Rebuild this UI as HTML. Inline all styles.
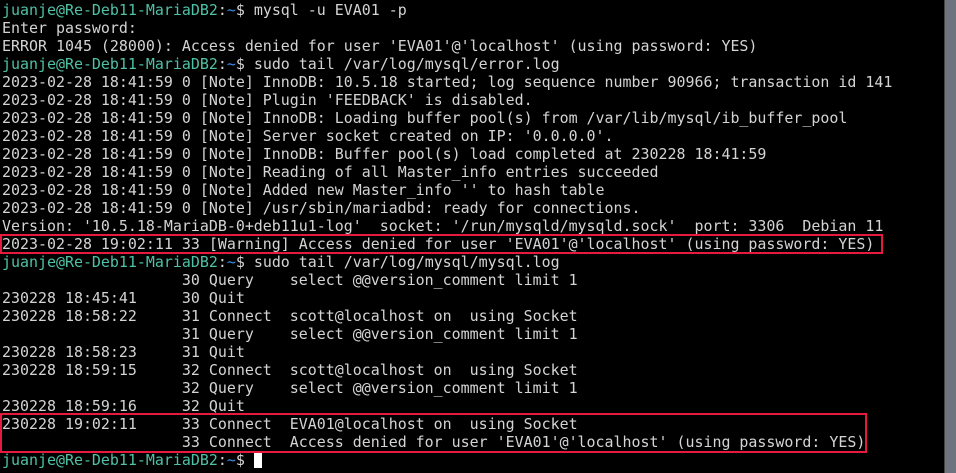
<html><head><style>
body{margin:0;background:#000;width:956px;height:473px;overflow:hidden;position:relative}
pre{margin:0;position:absolute;left:2px;top:1px;font-family:"DejaVu Sans Mono","Liberation Mono",monospace;font-size:14.95px;line-height:18px;color:#d4d4d4}
.g{color:#4fc1a6}.b{color:#3b8eea}
.sb{position:absolute;left:944px;top:0;width:12px;height:473px;background:#6f7380;border-left:1px solid #444}
.box{position:absolute;border:2px solid #e8193f;box-sizing:border-box}
.cur{display:inline-block;width:8px;height:16px;background:#fff;vertical-align:-3px}
</style></head><body>
<pre><span class="g">juanje@Re-Deb11-MariaDB2</span>:<span class="b">~</span>$ mysql -u EVA01 -p
Enter password:
ERROR 1045 (28000): Access denied for user 'EVA01'@'localhost' (using password: YES)
<span class="g">juanje@Re-Deb11-MariaDB2</span>:<span class="b">~</span>$ sudo tail /var/log/mysql/error.log
2023-02-28 18:41:59 0 [Note] InnoDB: 10.5.18 started; log sequence number 90966; transaction id 141
2023-02-28 18:41:59 0 [Note] Plugin 'FEEDBACK' is disabled.
2023-02-28 18:41:59 0 [Note] InnoDB: Loading buffer pool(s) from /var/lib/mysql/ib_buffer_pool
2023-02-28 18:41:59 0 [Note] Server socket created on IP: '0.0.0.0'.
2023-02-28 18:41:59 0 [Note] InnoDB: Buffer pool(s) load completed at 230228 18:41:59
2023-02-28 18:41:59 0 [Note] Reading of all Master_info entries succeeded
2023-02-28 18:41:59 0 [Note] Added new Master_info '' to hash table
2023-02-28 18:41:59 0 [Note] /usr/sbin/mariadbd: ready for connections.
Version: '10.5.18-MariaDB-0+deb11u1-log'  socket: '/run/mysqld/mysqld.sock'  port: 3306  Debian 11
2023-02-28 19:02:11 33 [Warning] Access denied for user 'EVA01'@'localhost' (using password: YES)
<span class="g">juanje@Re-Deb11-MariaDB2</span>:<span class="b">~</span>$ sudo tail /var/log/mysql/mysql.log
                    30 Query    select @@version_comment limit 1
230228 18:45:41     30 Quit
230228 18:58:22     31 Connect  scott@localhost on  using Socket
                    31 Query    select @@version_comment limit 1
230228 18:58:23     31 Quit
230228 18:59:15     32 Connect  scott@localhost on  using Socket
                    32 Query    select @@version_comment limit 1
230228 18:59:16     32 Quit
230228 19:02:11     33 Connect  EVA01@localhost on  using Socket
                    33 Connect  Access denied for user 'EVA01'@'localhost' (using password: YES)
<span class="g">juanje@Re-Deb11-MariaDB2</span>:<span class="b">~</span>$ <span class="cur"></span></pre>
<div class="box" style="left:0;top:234px;width:883px;height:20px"></div>
<div class="box" style="left:0;top:413px;width:867px;height:40px"></div>
<div class="sb"></div>
</body></html>
